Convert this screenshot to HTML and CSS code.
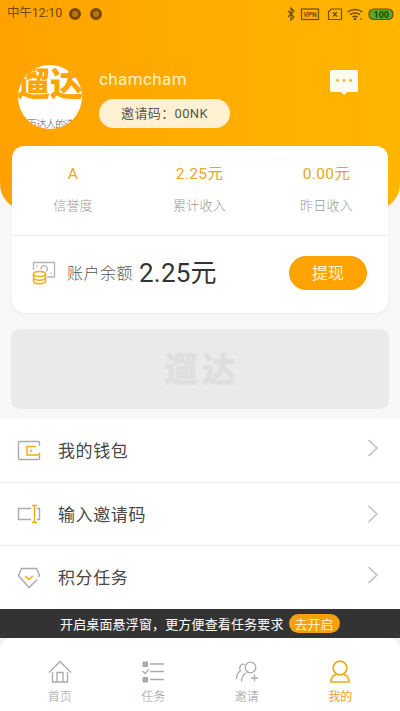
FILE: index.html
```html
<!DOCTYPE html>
<html lang="zh-CN">
<head>
<meta charset="utf-8">
<title>我的</title>
<link rel="stylesheet" href="styles.css">
</head>
<body>
<div class="app">
  <header class="hero">
    <div class="status">
      <span class="clock">中午12:10</span>
      <i class="coin"></i><i class="coin"></i>
      <svg class="sys" width="110" height="16" viewBox="0 0 110 16" fill="none" stroke="#744900" stroke-width="1.2">
        <path d="M3 5l6 6-3 3V2l3 3-6 6"/>
        <rect x="16.500" y="3" width="17" height="10.500"/>
        <path d="M46 3h10.500v10.500h-13V6z"/>
        <path d="M48 6l4 4.500M52 6l-4 4.500"/>
        <path d="M62.500 6q7.500-5 15 0M65 8.500q5-3 10 0M67.500 11q2.500-1.500 5 0" stroke-width="1.500"/>
        <circle cx="70" cy="13" r=".7"/><path d="M75 13h2"/>
        <rect x="84" y="3" width="24" height="10.500" rx="5" fill="#59ad26"/>
        <text x="18.500" y="11" class="vpn" textLength="13" lengthAdjust="spacingAndGlyphs">VPN</text>
        <text x="88.500" y="11.500" class="pct">100</text>
      </svg>
    </div>
    <div class="profile">
      <div class="avatar"><div class="avatar-logo">遛达</div><div class="avatar-sub">百达人的选</div></div>
      <div class="who">
        <div class="name">chamcham</div>
        <div class="code">邀请码：00NK</div>
      </div>
      <svg class="chat" width="28" height="26" viewBox="0 0 28 26"><path d="M2 0h24q2 0 2 2v18q0 2-2 2h-9l-3 3-3-3H2q-2 0-2-2V2q0-2 2-2z" fill="#fffdf2"/><g fill="#eeb52d"><circle cx="7.500" cy="10.500" r="1.400"/><circle cx="14" cy="10.500" r="1.400"/><circle cx="20.500" cy="10.500" r="1.400"/></g></svg>
    </div>
  </header>

  <section class="card">
    <div class="stats">
      <div class="stat"><b>A</b><span>信誉度</span></div>
      <div class="stat"><b>2.25元</b><span>累计收入</span></div>
      <div class="stat"><b>0.00元</b><span>昨日收入</span></div>
    </div>
    <div class="balance">
      <svg width="24" height="24" viewBox="0 0 24 24" fill="none" stroke="#b4b4b4" stroke-width="1.300">
        <path d="M1.500 9V1.500h21v14.500H15"/><path d="M9 8.500a3.200 3.200 0 1 1 5 2"/><path d="M4 5h1.500M18.500 12.500H20"/>
        <g stroke="#efac1c" stroke-width="1.500"><ellipse cx="7.500" cy="13" rx="6" ry="2.500"/><path d="M1.500 13v7c0 3.500 12 3.500 12 0v-7M1.500 16.500c0 3.500 12 3.500 12 0"/></g>
      </svg>
      <span class="bal-label">账户余额</span>
      <span class="bal-num">2.25元</span>
      <button class="withdraw">提现</button>
    </div>
  </section>

  <section class="banner">遛达</section>

  <nav class="menu">
    <a class="row r1">
      <svg class="ico" width="24" height="24" viewBox="0 0 24 24" fill="none" stroke="#aaa" stroke-width="1.400"><path d="M22.500 7V3.500q0-1-1-1h-19q-1 0-1 1v16q0 1 1 1h19q1 0 1-1V17"/><path d="M19 7.500h-9v8.500h12.500v-2.500M14 10.500v2.500" stroke="#efac1c" stroke-width="1.500"/></svg>
      <span>我的钱包</span>
      <svg class="arrow" width="12" height="18" viewBox="0 0 12 18"><path d="M1.500 1l8.500 8-8.500 8"/></svg>
    </a>
    <a class="row r2">
      <svg class="ico" width="24" height="24" viewBox="0 0 24 24" fill="none" stroke="#aaa" stroke-width="1.400"><path d="M14 6.500H1.500v11H14M20 6.500h2.500v11H20"/><path d="M15 3.500h5M15 20.500h5M17.500 3.500v17" stroke="#efac1c" stroke-width="1.500"/></svg>
      <span>输入邀请码</span>
      <svg class="arrow" width="12" height="18" viewBox="0 0 12 18"><path d="M1.500 1l8.500 8-8.500 8"/></svg>
    </a>
    <a class="row r3">
      <svg class="ico" width="24" height="24" viewBox="0 0 24 24" fill="none" stroke="#aaa" stroke-width="1.400"><path d="M20.500 13.500L12 21.500 1.500 9.500 4.500 2.500h15l3 6.500-1 2"/><path d="M8 10l4 3.500 4-3.500" stroke="#efac1c" stroke-width="1.500"/></svg>
      <span>积分任务</span>
      <svg class="arrow" width="12" height="18" viewBox="0 0 12 18"><path d="M1.500 1l8.500 8-8.500 8"/></svg>
    </a>
  </nav>

  <div class="tip"><span>开启桌面悬浮窗，更方便查看任务要求</span><button>去开启</button></div>

  <div class="tabwrap"><nav class="tabs">
    <a><svg width="24" height="24" viewBox="0 0 24 24" fill="none" stroke="#aaa" stroke-width="1.300"><path d="M1 12.500L12 1.500l11 11M4.500 12v10h15V12M9 22V12.500h6V22"/></svg><span>首页</span></a>
    <a><svg width="24" height="24" viewBox="0 0 24 24" fill="none" stroke="#aaa" stroke-width="1.300"><path d="M1.500 1.500h5.500v5.500H1.500zM1.500 17h5.500v5.500H1.500z" fill="#aaa" stroke="none"/><path d="M9 4h14M9 11.500h14M9 19.500h14M1.500 11l2.500 2.500 4-4"/></svg><span>任务</span></a>
    <a><svg width="24" height="24" viewBox="0 0 24 24" fill="none" stroke="#aaa" stroke-width="1.300"><circle cx="15.500" cy="7.500" r="5.300"/><path d="M6.500 21.500c0-5 2.500-8 6-9M10 4.500C6 3 3.500 7 5.500 11c-3 1.500-4 4-4 8M19.500 14.500v7M16 18H23"/></svg><span>邀请</span></a>
    <a class="on"><svg width="24" height="24" viewBox="0 0 24 24" fill="none" stroke="#efa914" stroke-width="1.700"><circle cx="12" cy="8" r="6.800"/><path d="M8 14.500c-3.500 1-5 3-5 7.500h18c0-4.500-1.500-6.500-5-7.500"/></svg><span>我的</span></a>
  </nav></div>
</div>
</body>
</html>
```

FILE: styles.css
```css
* { box-sizing: border-box; }
body { margin: 0; font-family: Roboto, "Noto Sans CJK SC", sans-serif; font-weight: 300; color: #333; }
.app { width: 400px; height: 711px; background: #f7f7f7; display: flex; flex-direction: column; overflow: hidden; }
.hero { height: 210px; flex: none; background: linear-gradient(90deg, #ffa200, #ffb600); border-radius: 0 0 26px 26px; }
.status { height: 27px; display: flex; align-items: center; padding: 0 5px 0 7px; color: #744900; }
.clock { font-size: 12.500px; line-height: 16px; font-weight: 400; width: 62px; margin-top: -2px; letter-spacing: -.15px; white-space: nowrap; }
.coin { width: 12px; height: 12px; border-radius: 50%; background: #b97812; border: 3px solid #7c4800; margin-right: 8.500px; }
.sys { margin-left: auto; }
.sys text { stroke: none; font-family: Roboto, sans-serif; }
.vpn { font-size: 7.500px; font-weight: 700; fill: #744900; }
.pct { font-size: 9px; font-weight: 700; fill: #174b00; }
.profile { display: flex; padding: 38px 42px 0 18px; }
.avatar { width: 64px; height: 64px; border-radius: 50%; background: #fff; overflow: hidden; flex: none; }
.avatar-logo { font-size: 33px; line-height: 42px; font-weight: 900; color: #ffa500; width: 70px; margin-left: -1px; margin-top: -1px; white-space: nowrap; }
.avatar-sub { font-size: 10px; line-height: 16px; color: #555; white-space: nowrap; margin: 11px 0 0 9px; letter-spacing: -.6px; }
.who { margin-left: 17px; }
.name { font-size: 17px; line-height: 20px; color: #fff2c4; font-weight: 400; margin-top: 4px; letter-spacing: .4px; }
.code { width: 131px; height: 29px; margin-top: 10px; border-radius: 15px; background: #fff1d2; text-align: center; line-height: 29px; font-size: 13px; color: #555; letter-spacing: .35px; font-weight: 400; }
.chat { margin: 5px 0 0 auto; }
.card { flex: none; width: 376px; height: 167px; margin: -64px auto 0; background: #fff; border-radius: 12px; box-shadow: 0 1px 2px #0001; }
.stats { height: 90px; display: grid; grid-template-columns: 122px 131px 123px; border-bottom: 1px solid #eee; padding-top: 17px; }
.stat { text-align: center; }
.stat b { display: block; font-size: 15.500px; line-height: 22px; font-weight: 400; color: #e5a629; letter-spacing: .4px; }
.stat span { display: block; font-size: 13px; line-height: 20px; color: #999; margin-top: 11px; letter-spacing: .2px; }
.balance { height: 74px; display: flex; align-items: center; padding: 0 21px 0 20px; }
.bal-label { font-size: 16px; color: #555; margin: -2px 0 0 11px; letter-spacing: .5px; white-space: nowrap; }
.bal-num { font-size: 26px; margin: -5px 0 0 6px; letter-spacing: .2px; font-weight: 400; white-space: nowrap; }
.withdraw { margin-left: auto; width: 78px; height: 34px; border-radius: 17px; border: 0; background: #ffa300; color: #fff3cd; font: 400 16px/32px "Noto Sans CJK SC", sans-serif; padding: 0 0 2px; }
.banner { flex: none; width: 378px; height: 80px; margin: 16px auto 0; border-radius: 9px; background: #eaeaea; text-align: center; line-height: 82px; font-size: 34px; font-weight: 900; color: #dedfdf; letter-spacing: 4px; padding-left: 4px; }
.menu { flex: none; height: 190px; margin-top: 10px; background: #fff; }
.row { display: flex; align-items: center; height: 63px; padding: 0 21px 0 17px; border-bottom: 1px solid #eee; font-size: 17px; font-weight: 400; color: #484848; }
.r1 { height: 64px; }
.r3 { border: 0; }
.row span { margin: -2px 0 0 17px; letter-spacing: .6px; }
.arrow { margin-left: auto; fill: none; stroke: #bdbdbd; stroke-width: 1.400; }
.r1 .arrow, .r3 .arrow { margin-bottom: 6px; }
.tip { flex: none; height: 29px; background: #333; color: #fff; display: flex; align-items: center; padding-left: 60px; font-size: 13px; letter-spacing: .15px; white-space: nowrap; font-weight: 400; }
.tip span { margin-top: -1px; }
.tip button { margin-left: 5px; width: 51px; height: 19px; border: 0; border-radius: 10px; padding: 0; background: #f5a10c; color: #fff0c2; font: 400 13px/18px "Noto Sans CJK SC", sans-serif; }
.tabwrap { flex: 1; background: #f1f1f1; }
.tabs { height: 100%; background: #fff; border-radius: 12px 12px 0 0; display: grid; grid-template-columns: repeat(4, 93.500px); padding: 22px 13px 0; }
.tabs a { display: flex; flex-direction: column; align-items: center; font-size: 12px; color: #999; }
.tabs span { line-height: 18px; margin-top: 4px; }
.tabs .on { color: #e8a313; font-weight: 400; }
```
